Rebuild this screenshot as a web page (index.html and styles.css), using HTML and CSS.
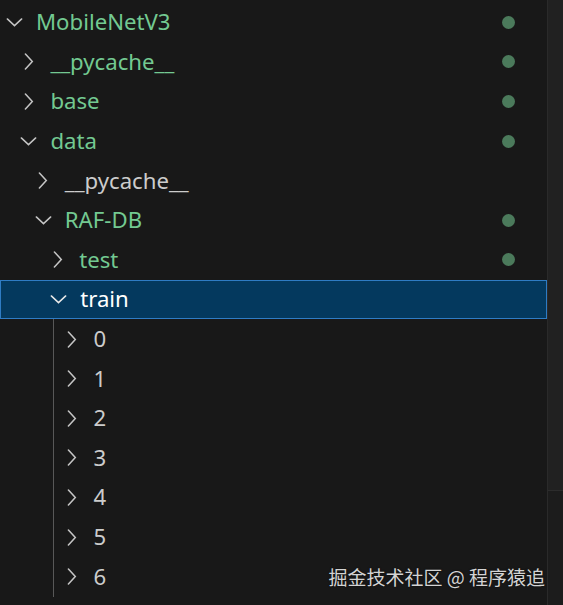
FILE: index.html
```html
<!DOCTYPE html>
<html>
<head>
<meta charset="utf-8">
<link rel="stylesheet" href="styles.css">
</head>
<body>
<div class="view">
  <div class="tree">
    <div class="row green l0"><span class="tw"><svg class="down" viewBox="0 0 18 10"><path d="M1 1 L9 8.5 L17 1"/></svg></span><span class="label">MobileNetV3</span><span class="dot"></span></div>
    <div class="row green l1"><span class="tw"><svg class="right" viewBox="0 0 10 18"><path d="M1.2 1 L8.5 9 L1.2 17"/></svg></span><span class="label">__pycache__</span><span class="dot"></span></div>
    <div class="row green l1"><span class="tw"><svg class="right" viewBox="0 0 10 18"><path d="M1.2 1 L8.5 9 L1.2 17"/></svg></span><span class="label">base</span><span class="dot"></span></div>
    <div class="row green l1"><span class="tw"><svg class="down" viewBox="0 0 18 10"><path d="M1 1 L9 8.5 L17 1"/></svg></span><span class="label">data</span><span class="dot"></span></div>
    <div class="row l2"><span class="tw"><svg class="right" viewBox="0 0 10 18"><path d="M1.2 1 L8.5 9 L1.2 17"/></svg></span><span class="label">__pycache__</span></div>
    <div class="row green l2"><span class="tw"><svg class="down" viewBox="0 0 18 10"><path d="M1 1 L9 8.5 L17 1"/></svg></span><span class="label">RAF-DB</span><span class="dot"></span></div>
    <div class="row green l3"><span class="tw"><svg class="right" viewBox="0 0 10 18"><path d="M1.2 1 L8.5 9 L1.2 17"/></svg></span><span class="label">test</span><span class="dot"></span></div>
    <div class="row sel l3"><span class="tw"><svg class="down" viewBox="0 0 18 10"><path d="M1 1 L9 8.5 L17 1"/></svg></span><span class="label">train</span></div>
    <div class="group">
      <div class="row c4"><span class="tw"><svg class="right" viewBox="0 0 10 18"><path d="M1.2 1 L8.5 9 L1.2 17"/></svg></span><span class="label">0</span></div>
      <div class="row c4"><span class="tw"><svg class="right" viewBox="0 0 10 18"><path d="M1.2 1 L8.5 9 L1.2 17"/></svg></span><span class="label">1</span></div>
      <div class="row c4"><span class="tw"><svg class="right" viewBox="0 0 10 18"><path d="M1.2 1 L8.5 9 L1.2 17"/></svg></span><span class="label">2</span></div>
      <div class="row c4"><span class="tw"><svg class="right" viewBox="0 0 10 18"><path d="M1.2 1 L8.5 9 L1.2 17"/></svg></span><span class="label">3</span></div>
      <div class="row c4"><span class="tw"><svg class="right" viewBox="0 0 10 18"><path d="M1.2 1 L8.5 9 L1.2 17"/></svg></span><span class="label">4</span></div>
      <div class="row c4"><span class="tw"><svg class="right" viewBox="0 0 10 18"><path d="M1.2 1 L8.5 9 L1.2 17"/></svg></span><span class="label">5</span></div>
      <div class="row c4"><span class="tw"><svg class="right" viewBox="0 0 10 18"><path d="M1.2 1 L8.5 9 L1.2 17"/></svg></span><span class="label">6</span></div>
    </div>
  </div>
  <div class="scrollbar"><div class="thumb"></div></div>
  <div class="watermark">掘金技术社区 @ 程序猿追</div>
</div>
</body>
</html>
```

FILE: styles.css
```css
html, body {
  margin: 0;
  padding: 0;
  background: #181818;
}
.view {
  position: relative;
  display: flex;
  width: 563px;
  height: 605px;
  overflow: hidden;
  font-family: "Noto Sans", "Open Sans", "Liberation Sans", sans-serif;
  font-size: 22.2px;
  color: #cccccc;
}
.tree {
  width: 547px;
  padding-top: 2.6px;
  flex: none;
}
.row {
  height: 39.6px;
  box-sizing: border-box;
  display: flex;
  align-items: center;
  padding-right: 32px;
}
.row.l0 { padding-left: 0; }
.row.l1 { padding-left: 14.4px; }
.row.l2 { padding-left: 28.8px; }
.row.l3 { padding-left: 43.2px; }
.group .row.c4 { padding-left: 3.6px; }
.tw {
  width: 29px;
  height: 39px;
  flex: none;
  display: flex;
  align-items: center;
  justify-content: center;
  margin-right: 7px;
}
.tw svg {
  fill: none;
  stroke: #c5c5c5;
  stroke-width: 1.6;
  stroke-linecap: round;
  stroke-linejoin: miter;
}
.tw svg.down { width: 17px; height: 9px; }
.tw svg.right { width: 10px; height: 17px; }
.label {
  white-space: nowrap;
  line-height: 1;
}
.green .label { color: #73c991; }
.dot {
  margin-left: auto;
  width: 13px;
  height: 13px;
  border-radius: 50%;
  background: #4b7a5b;
  flex: none;
}
.row.sel {
  background: #04395e;
  border: 1px solid #2f7cc4;
  color: #ffffff;
}
.row.sel .tw svg { stroke: #e8e8e8; }
.group {
  margin-left: 53px;
  border-left: 1px solid #585858;
}
.scrollbar {
  flex: 1;
  border-left: 1px solid #2a2a2a;
  background: #1c1c1c;
}
.thumb {
  height: 490px;
  background: #212121;
  border-bottom: 1px solid #2c2c2c;
}
.watermark {
  position: absolute;
  right: 18px;
  top: 564px;
  font-family: "Noto Sans CJK SC", "Noto Sans", sans-serif;
  font-size: 19px;
  line-height: 26px;
  color: #d4d4d4;
  text-shadow: 0 0 2px rgba(0,0,0,0.6);
}
```
